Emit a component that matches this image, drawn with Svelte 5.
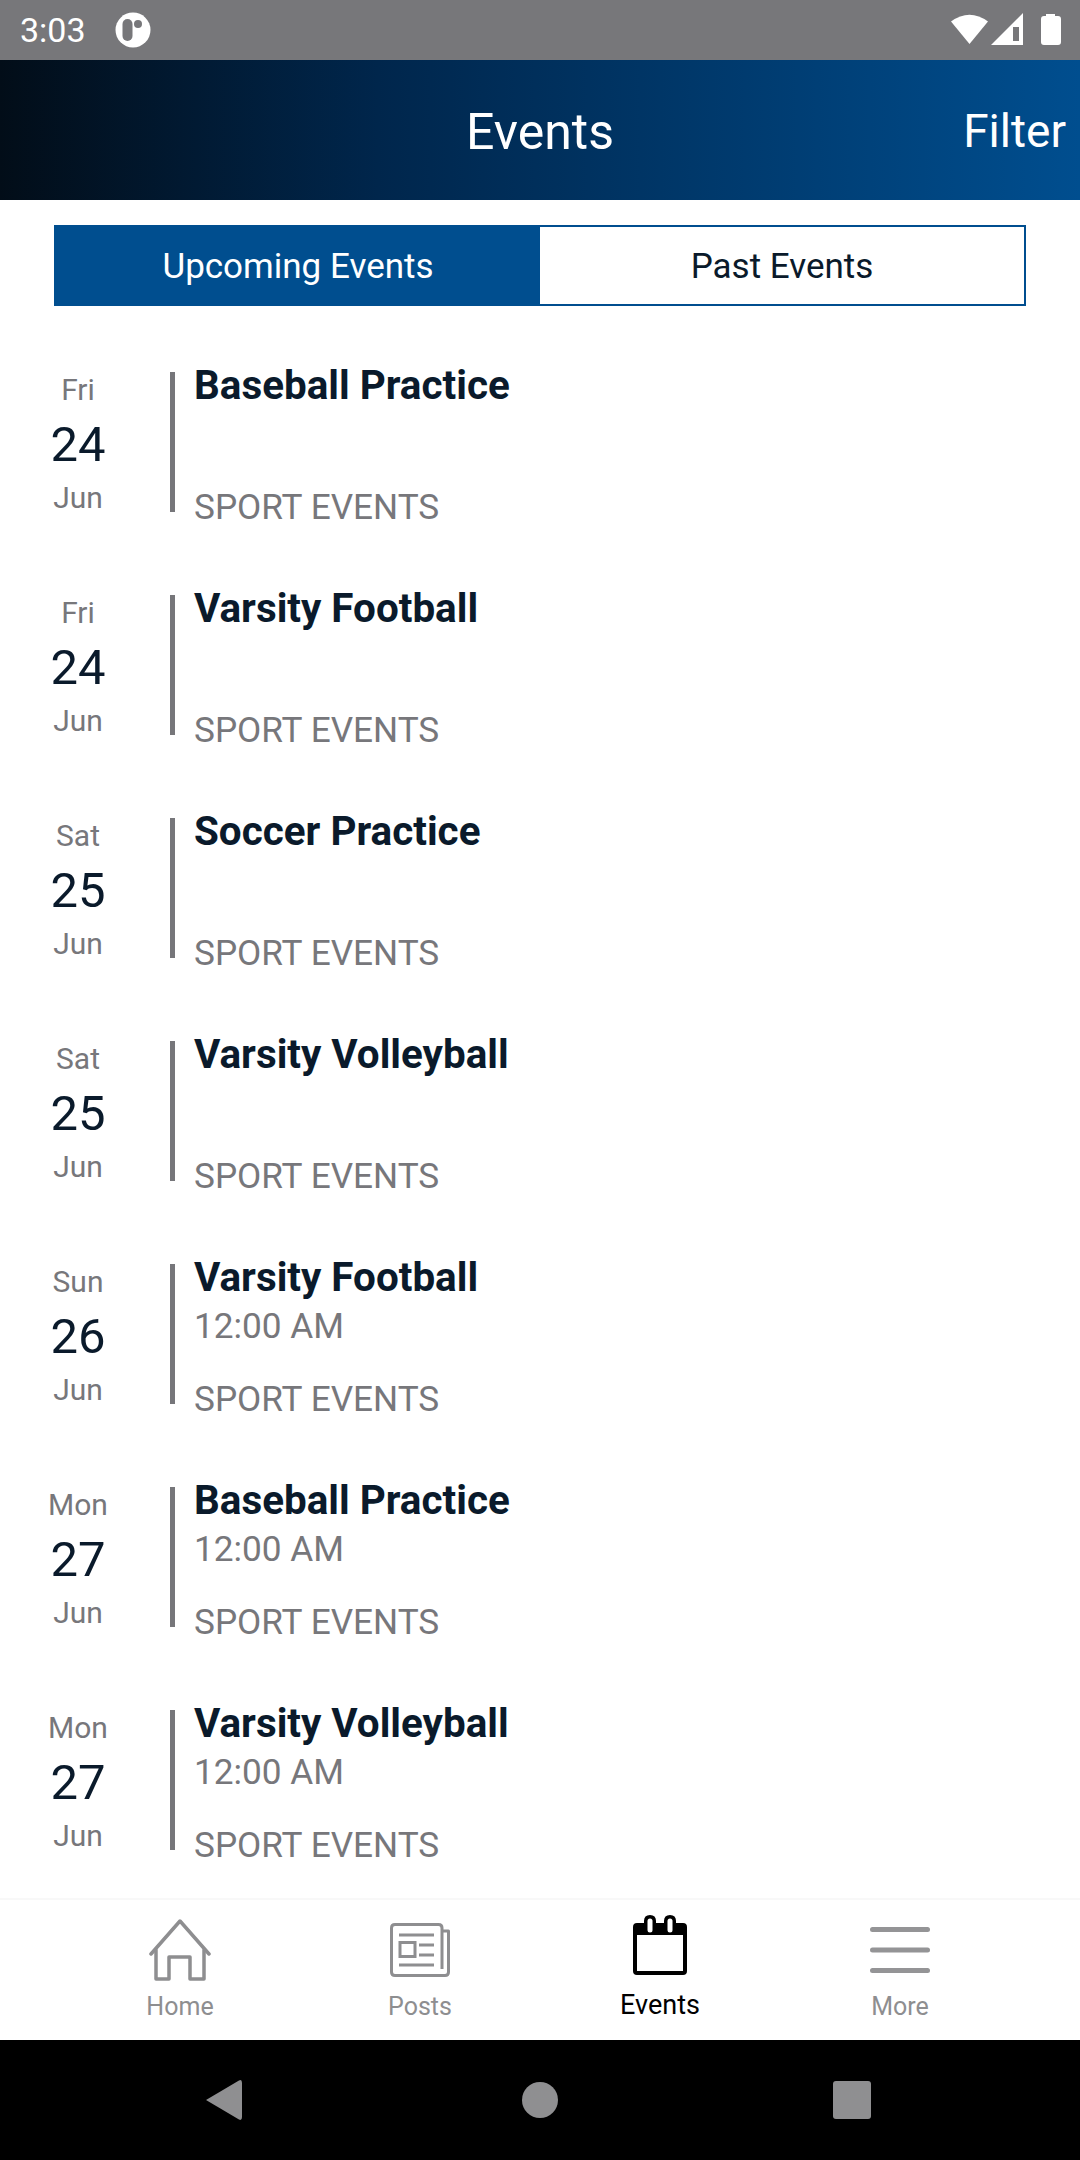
<script>
  const events = [
    { d: 'Fri', n: '24', t: 'Baseball Practice', time: '' },
    { d: 'Fri', n: '24', t: 'Varsity Football', time: '' },
    { d: 'Sat', n: '25', t: 'Soccer Practice', time: '' },
    { d: 'Sat', n: '25', t: 'Varsity Volleyball', time: '' },
    { d: 'Sun', n: '26', t: 'Varsity Football', time: '12:00 AM' },
    { d: 'Mon', n: '27', t: 'Baseball Practice', time: '12:00 AM' },
    { d: 'Mon', n: '27', t: 'Varsity Volleyball', time: '12:00 AM' }
  ];
</script>

<div class="phone">
  <div class="status">
    <span class="clock">3:03</span>
    <svg class="pocket" width="36" height="36" viewBox="0 0 36 36">
      <circle cx="18" cy="18" r="17.500" fill="#fff" />
      <rect x="7.500" y="7" width="10" height="22" rx="5" fill="#77777a" />
      <circle cx="23" cy="12" r="4" fill="#77777a" />
    </svg>
    <span class="spacer"></span>
    <svg class="sys" width="112" height="34" viewBox="0 0 112 34">
      <path d="M1 9.500 Q19.500 -4 38 9.500 L19.500 32 Z" fill="#fff" />
      <path d="M41 33 L73 1 V33 Z M63 15 V29 H69 V15 Z" fill="#fff" fill-rule="evenodd" />
      <path d="M96 2 H105 V4 H108 Q111 4 111 7 V30 Q111 33 108 33 H94 Q91 33 91 30 V7 Q91 4 94 4 H96 Z" fill="#fff" />
    </svg>
  </div>

  <header class="top">
    <span class="title">Events</span>
    <span class="filter">Filter</span>
  </header>

  <main class="content">
    <div class="tabs">
      <div class="tab active">Upcoming Events</div>
      <div class="tab">Past Events</div>
    </div>

    <div class="list">
      {#each events as e}
        <div class="row">
          <div class="date">
            <span class="dow">{e.d}</span>
            <span class="num">{e.n}</span>
            <span class="mon">Jun</span>
          </div>
          <div class="bar"></div>
          <div class="info">
            <span class="name">{e.t}</span>
            {#if e.time}<span class="time">{e.time}</span>{/if}
            <span class="cat">SPORT EVENTS</span>
          </div>
        </div>
      {/each}
    </div>
  </main>

  <nav class="tabbar">
    <div class="item">
      <div class="ico">
        <svg class="i-home" width="62" height="62" viewBox="0 0 62 62" fill="none" stroke="#8e8e90" stroke-width="3.500" stroke-linecap="round" stroke-linejoin="round">
          <path d="M2 35 L31 2 L60 35" />
          <path d="M7 31 V60 H20 V38 H41 V60 H55 V31" />
        </svg>
      </div>
      <span class="lbl">Home</span>
    </div>
    <div class="item">
      <div class="ico">
        <svg class="i-posts" width="60" height="54" viewBox="0 0 60 54" fill="none" stroke="#8e8e90" stroke-width="3">
          <path d="M52 46 V5 Q52 1.500 48.500 1.500 H5 Q1.500 1.500 1.500 5 V49 Q1.500 52.500 5 52.500 H55 Q58.500 52.500 58.500 49 V8 H53" stroke-linejoin="round" />
          <path d="M9 12 H44 M9 42 H44 M29 22 H44 M29 32 H44" />
          <rect x="10" y="19.500" width="15" height="14" />
        </svg>
      </div>
      <span class="lbl">Posts</span>
    </div>
    <div class="item on">
      <div class="ico">
        <svg class="i-events" width="54" height="60" viewBox="0 0 54 60">
          <path d="M4 8 H11 V6 Q11 0 17 0 Q23 0 23 6 V8 H31 V6 Q31 0 37 0 Q43 0 43 6 V8 H50 Q54 8 54 12 V56 Q54 60 50 60 H4 Q0 60 0 56 V12 Q0 8 4 8 Z" fill="#000" />
          <rect x="4" y="20" width="46" height="36" fill="#fff" />
          <rect x="14.500" y="3.500" width="5" height="14" rx="2.500" fill="#fff" />
          <rect x="34.500" y="3.500" width="5" height="14" rx="2.500" fill="#fff" />
        </svg>
      </div>
      <span class="lbl">Events</span>
    </div>
    <div class="item">
      <div class="ico">
        <svg class="i-more" width="60" height="46" viewBox="0 0 60 46" fill="#949496">
          <rect x="0" y="0" width="60" height="5" rx="2.500" />
          <rect x="0" y="20.500" width="60" height="5" rx="2.500" />
          <rect x="0" y="41" width="60" height="5" rx="2.500" />
        </svg>
      </div>
      <span class="lbl">More</span>
    </div>
  </nav>

  <div class="sysnav">
    <svg class="back" width="38" height="42" viewBox="0 0 38 42"><path d="M1 21 L34 1.500 Q37 0 37 4 V38 Q37 42 34 40.500 Z" fill="#8f8f91" /></svg>
    <span class="circle"></span>
    <span class="square"></span>
  </div>
</div>

<style>
  :global(body) { margin: 0; background: #fff; }
  .phone {
    width: 1080px;
    height: 2160px;
    display: flex;
    flex-direction: column;
    font-family: Roboto, "Liberation Sans", sans-serif;
    overflow: hidden;
  }
  .status {
    height: 60px;
    background: #77777a;
    display: flex;
    align-items: center;
    padding: 0 18px 0 20px;
    color: #fff;
    box-sizing: border-box;
  }
  .clock { font-size: 34px; }
  .pocket { margin-left: 29px; }
  .spacer { flex: 1; }
  .sys { margin-top: -2px; }
  .top {
    height: 140px;
    flex: none;
    position: relative;
    background: linear-gradient(to right, #020d18 0%, #00264c 35%, #004e8f 100%);
    color: #fff;
    display: flex;
    align-items: center;
    justify-content: center;
  }
  .title { font-size: 50px; padding-top: 3px; }
  .filter { position: absolute; right: 14px; font-size: 46px; padding-top: 2px; }
  .content { flex: 1; min-height: 0; background: #fff; }
  .tabs {
    margin: 25px 54px 0;
    height: 81px;
    box-sizing: border-box;
    border: 2px solid #004e8f;
    display: flex;
  }
  .tab {
    flex: 1;
    display: flex;
    align-items: center;
    justify-content: center;
    font-size: 35px;
    color: #0a1a2b;
    padding-top: 2px;
    box-sizing: border-box;
  }
  .tab.active { background: #004e8f; color: #fff; }
  .list { padding-top: 66px; }
  .row { height: 223px; display: flex; align-items: flex-start; }
  .date {
    width: 156px;
    display: flex;
    flex-direction: column;
    align-items: center;
  }
  .dow, .mon { font-size: 30px; color: #77777b; line-height: 36px; }
  .num { font-size: 49px; color: #0a1a2b; line-height: 72px; padding-top: 1px; margin-bottom: -1px; }
  .bar { width: 5px; height: 140px; background: #76767a; margin-left: 14px; }
  .info {
    margin-left: 19px;
    margin-top: -11px;
    height: 171px;
    display: flex;
    flex-direction: column;
  }
  .name { font-size: 40.400px; font-weight: 700; color: #0a1a2b; line-height: 50px; }
  .time { font-size: 35.200px; color: #77777b; line-height: 50px; margin-top: -2px; }
  .cat { margin-top: auto; font-size: 35.200px; color: #77777b; line-height: 50px; }
  .tabbar {
    height: 142px;
    flex: none;
    background: #fff;
    border-top: 2px solid #f8f8f8;
    box-sizing: border-box;
    display: grid;
    grid-template-columns: repeat(4, 240px);
    justify-content: center;
  }
  .item {
    display: flex;
    flex-direction: column;
    align-items: center;
    color: #8e8e90;
    font-size: 25px;
  }
  .ico { height: 91px; display: flex; justify-content: center; }
  .i-home { margin-top: 19px; }
  .i-posts { margin-top: 23px; }
  .i-events { margin-top: 15px; }
  .i-more { margin-top: 27px; }
  .lbl { line-height: 32px; }
  .item.on { color: #000; font-size: 27px; }
  .item.on .lbl { margin-top: -2px; }
  .sysnav {
    height: 120px;
    flex: none;
    background: #000;
    display: grid;
    grid-template-columns: repeat(3, 315px);
    justify-content: center;
    justify-items: center;
    align-items: center;
  }
  .back { margin-right: 2px; }
  .circle { width: 36px; height: 36px; border-radius: 50%; background: #8f8f91; }
  .square { width: 38px; height: 38px; border-radius: 3px; background: #8f8f91; margin-right: 6px; }
</style>
